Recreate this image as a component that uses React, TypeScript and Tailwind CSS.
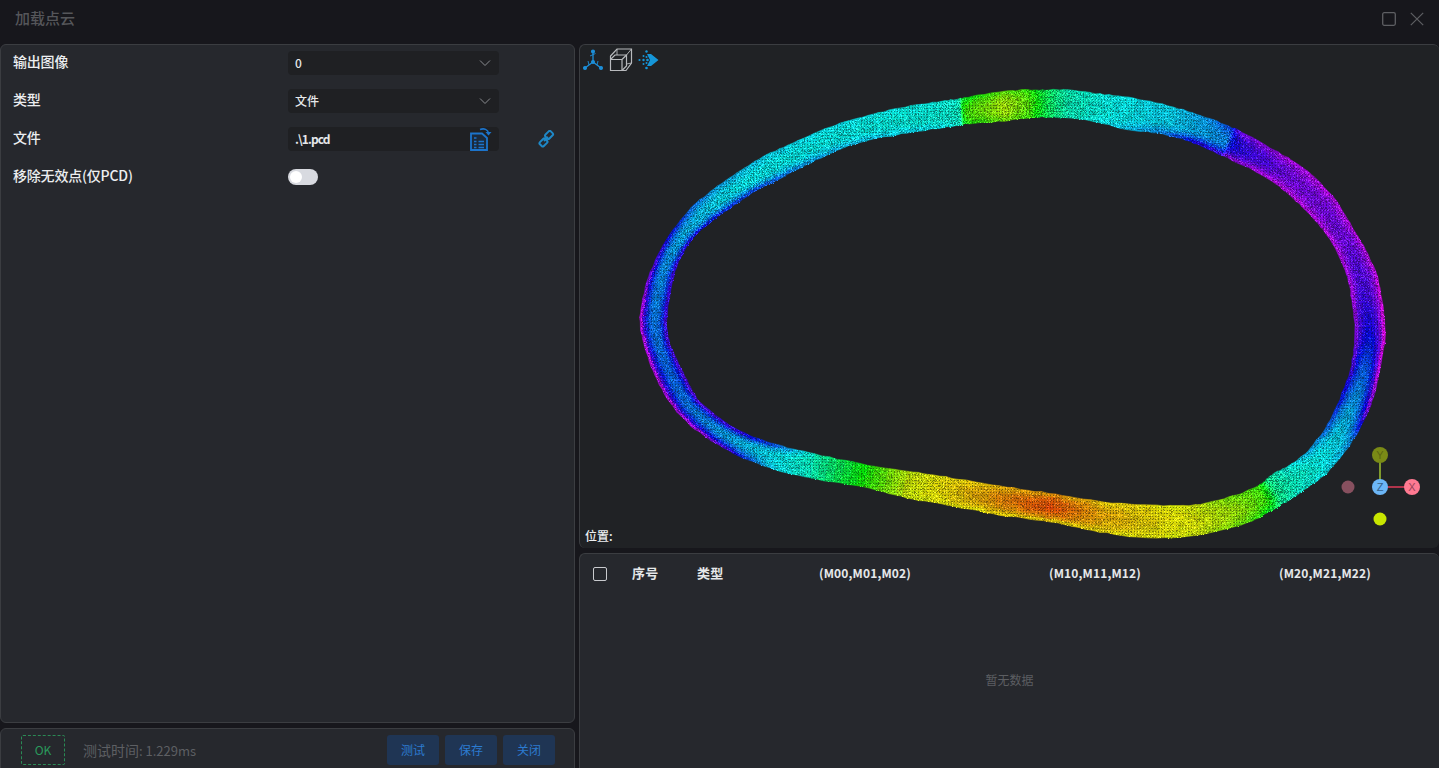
import React, { useMemo } from "react";

// ox, oy, ix, iy, mid hue, outer-edge hue, inner-edge hue
const S: number[][] = [
  [640, 318, 667, 318, 208, 285, 288],
  [647, 282, 675, 272, 204, 270, 288],
  [663, 245, 690, 242, 197, 245, 278],
  [687, 212, 712, 221, 190, 215, 270],
  [710, 192, 730, 208, 184, 200, 260],
  [737, 173, 755, 191, 180, 192, 250],
  [763, 157, 776, 181, 179, 186, 240],
  [793, 143, 806, 165, 179, 184, 215],
  [830, 127, 840, 149, 178, 182, 203],
  [863, 117, 870, 140, 177, 180, 196],
  [900, 108, 907, 133, 176, 178, 190],
  [937, 102, 940, 128, 174, 176, 184],
  [958, 99, 960, 125, 168, 170, 172],
  [964, 98, 966, 124, 105, 125, 125],
  [1000, 92, 1003, 121, 76, 95, 100],
  [1025, 90, 1027, 118, 98, 108, 112],
  [1045, 90, 1045, 117, 138, 140, 140],
  [1067, 90, 1067, 118, 165, 165, 168],
  [1100, 94, 1098, 122, 176, 176, 184],
  [1133, 98, 1125, 129, 181, 182, 195],
  [1173, 107, 1163, 134, 188, 188, 225],
  [1205, 117, 1194, 143, 198, 202, 280],
  [1230, 127, 1219, 154, 206, 225, 290],
  [1242, 132, 1228, 158, 245, 268, 295],
  [1283, 155, 1267, 178, 266, 282, 298],
  [1310, 173, 1293, 198, 270, 286, 298],
  [1333, 197, 1313, 218, 270, 286, 298],
  [1353, 228, 1330, 240, 268, 285, 298],
  [1370, 258, 1345, 270, 262, 288, 298],
  [1380, 288, 1351, 295, 256, 292, 298],
  [1385, 330, 1355, 335, 240, 296, 294],
  [1380, 370, 1350, 370, 215, 288, 280],
  [1370, 407, 1335, 410, 196, 272, 245],
  [1353, 440, 1317, 440, 184, 205, 215],
  [1330, 470, 1295, 462, 175, 180, 185],
  [1300, 493, 1275, 473, 165, 170, 165],
  [1284, 503, 1266, 480, 150, 160, 150],
  [1272, 510, 1258, 486, 105, 130, 110],
  [1247, 523, 1233, 496, 82, 95, 100],
  [1200, 535, 1195, 505, 63, 66, 70],
  [1150, 538, 1150, 505, 55, 60, 60],
  [1100, 532, 1105, 502, 42, 56, 56],
  [1050, 522, 1055, 494, 18, 50, 50],
  [1000, 515, 1007, 487, 35, 55, 55],
  [947, 505, 952, 478, 55, 60, 60],
  [907, 498, 913, 472, 68, 70, 70],
  [863, 487, 868, 465, 120, 115, 118],
  [810, 478, 815, 454, 168, 170, 172],
  [770, 468, 778, 445, 184, 190, 240],
  [733, 453, 745, 433, 194, 250, 288],
  [703, 435, 720, 418, 204, 280, 292],
  [677, 412, 697, 398, 210, 285, 292],
  [657, 380, 683, 372, 215, 285, 292],
  [645, 347, 670, 343, 210, 285, 288],
];

function cr(a: number, b: number, c: number, d: number, t: number) {
  return 0.5 * (2 * b + (c - a) * t + (2 * a - 5 * b + 4 * c - d) * t * t + (3 * b - a - 3 * c + d) * t * t * t);
}

function buildRing() {
  let seed = 12345;
  const rnd = () => {
    seed = (seed * 1664525 + 1013904223) >>> 0;
    return seed / 4294967296;
  };
  const n = S.length;
  const sub = 7;
  const across = 9;
  const rows: { x: number[]; y: number[]; h: number[] }[] = [];
  for (let i = 0; i < n; i++) {
    const p0 = S[(i - 1 + n) % n];
    const p1 = S[i];
    const p2 = S[(i + 1) % n];
    const p3 = S[(i + 2) % n];
    for (let k = 0; k < sub; k++) {
      const t = k / sub;
      const ox = cr(p0[0], p1[0], p2[0], p3[0], t) + (rnd() - 0.5) * 1.1;
      const oy = cr(p0[1], p1[1], p2[1], p3[1], t) + (rnd() - 0.5) * 1.1;
      const ix = cr(p0[2], p1[2], p2[2], p3[2], t) + (rnd() - 0.5) * 1.1;
      const iy = cr(p0[3], p1[3], p2[3], p3[3], t) + (rnd() - 0.5) * 1.1;
      const mid = p1[4] + (p2[4] - p1[4]) * t;
      const eo = p1[5] + (p2[5] - p1[5]) * t;
      const ei = p1[6] + (p2[6] - p1[6]) * t;
      const xs: number[] = [];
      const ys: number[] = [];
      const hs: number[] = [];
      for (let j = 0; j <= across; j++) {
        const u = j / across;
        xs.push(ox + (ix - ox) * u);
        ys.push(oy + (iy - oy) * u);
        const c = 2 * u - 1;
        const e = Math.pow(Math.abs(c), 2.2);
        hs.push(mid + ((c < 0 ? eo : ei) - mid) * e);
      }
      rows.push({ x: xs, y: ys, h: hs });
    }
  }
  const polys: { p: string; c: string }[] = [];
  const bright = new Map<number, string>();
  const dark = new Map<number, string>();
  for (let r = 0; r < rows.length; r++) {
    const a = rows[r];
    const b = rows[(r + 1) % rows.length];
    for (let j = 0; j < across; j++) {
      const h = a.h[j] + (rnd() - 0.5) * 4;
      const l = 42 + rnd() * 7;
      const p = `${a.x[j].toFixed(1)},${a.y[j].toFixed(1)} ${a.x[j + 1].toFixed(1)},${a.y[j + 1].toFixed(1)} ${b.x[j + 1].toFixed(1)},${b.y[j + 1].toFixed(1)} ${b.x[j].toFixed(1)},${b.y[j].toFixed(1)}`;
      polys.push({ p, c: `hsl(${h.toFixed(0)} 96% ${l.toFixed(0)}%)` });
      const q = Math.round(h / 6) * 6;
      const edge = Math.abs((j + 0.5) / across - 0.5) * 2;
      for (let d = 0; d < 4; d++) {
        const u = rnd();
        const v = rnd();
        const px = Math.round(a.x[j] + (a.x[j + 1] - a.x[j]) * v + (b.x[j] - a.x[j]) * u);
        const py = Math.round(a.y[j] + (a.y[j + 1] - a.y[j]) * v + (b.y[j] - a.y[j]) * u);
        const seg = `M${px} ${py}h1v1h-1z`;
        if (rnd() < 0.4 + edge * 0.35) bright.set(q, (bright.get(q) || "") + seg);
        else dark.set(q, (dark.get(q) || "") + seg);
      }
    }
  }
  const outer = rows.map((r) => `${r.x[0].toFixed(1)},${r.y[0].toFixed(1)}`).join(" ");
  const inner = rows
    .slice()
    .reverse()
    .map((r) => `${r.x[across].toFixed(1)},${r.y[across].toFixed(1)}`)
    .join(" ");
  const first = rows[0];
  const d = `M${outer.split(" ").join("L")}L${first.x[0].toFixed(1)},${first.y[0].toFixed(1)}ZM${inner.split(" ").join("L")}Z`;
  return {
    polys,
    d,
    bright: Array.from(bright.entries()),
    dark: Array.from(dark.entries()),
  };
}

function PointCloud() {
  const { polys, d, bright, dark } = useMemo(buildRing, []);
  return (
    <svg className="absolute left-0 top-0" width="858" height="502" viewBox="580 45 858 502">
      <defs>
        <pattern id="mesh" width="3" height="3" patternUnits="userSpaceOnUse">
          <rect x="0" y="0" width="1" height="1" fill="#0c1418" fillOpacity="0.42" />
        </pattern>
        <pattern id="mesh2" width="2.7" height="2.7" patternUnits="userSpaceOnUse">
          <rect x="0" y="0" width="1" height="2.7" fill="#0c1418" fillOpacity="0.1" />
          <rect x="0" y="0" width="2.7" height="1" fill="#0c1418" fillOpacity="0.1" />
        </pattern>
      </defs>
      {polys.map((q, i) => (
        <polygon key={i} points={q.p} fill={q.c} stroke={q.c} strokeWidth="0.5" />
      ))}
      <path d={d} fill="url(#mesh)" fillRule="evenodd" />
      <path d={d} fill="url(#mesh2)" fillRule="evenodd" />
      {dark.map(([h, p]) => (
        <path key={h} d={p} fill={`hsl(${h} 90% 27%)`} shapeRendering="crispEdges" />
      ))}
      {bright.map(([h, p]) => (
        <path key={h} d={p} fill={`hsl(${h} 100% 57%)`} shapeRendering="crispEdges" />
      ))}
    </svg>
  );
}

function Chevron() {
  return (
    <svg width="12" height="8" viewBox="0 0 12 8" fill="none" stroke="#8a8c90" strokeWidth="1">
      <path d="M1 1.5 L6 6.5 L11 1.5" />
    </svg>
  );
}

function Row({ label, children, extra }: { label: string; children: React.ReactNode; extra?: React.ReactNode }) {
  return (
    <div className="flex h-[38px] items-center">
      <div className="w-[287px] pb-[4px] pl-[12px] text-[14px] font-medium tracking-[-0.2px] text-[#eceef0]">{label}</div>
      <div className="w-[211px]">{children}</div>
      {extra}
    </div>
  );
}

function Select({ value }: { value: string }) {
  return (
    <div className="flex h-[24px] items-center justify-between rounded-[4px] bg-[#1f2023] pl-[7px] pr-[8px] text-[12px] font-medium text-[#e6e8ea]">
      <span>{value}</span>
      <Chevron />
    </div>
  );
}

function Button({ label }: { label: string }) {
  return (
    <div className="flex h-[30px] w-[52px] items-center justify-center rounded-[3px] bg-[#1f3554] text-[12px] text-[#2c7bd0]">
      {label}
    </div>
  );
}

function Gizmo() {
  return (
    <div className="absolute left-[759px] top-[399px] h-[90px] w-[90px]">
      <svg width="90" height="90" viewBox="0 0 90 90" fontFamily="Liberation Sans, sans-serif" fontSize="11" textAnchor="middle">
        <line x1="41" y1="11" x2="41" y2="43" stroke="#7f9a2c" strokeWidth="2" />
        <line x1="41" y1="43" x2="73" y2="43" stroke="#b0344b" strokeWidth="2" />
        <circle cx="9" cy="43" r="6.5" fill="#87505f" />
        <circle cx="41" cy="75" r="6.5" fill="#c8e600" />
        <circle cx="41" cy="11" r="8" fill="#7a8a16" />
        <circle cx="41" cy="43" r="8" fill="#6cb6f6" />
        <circle cx="73" cy="43" r="8" fill="#ff7a92" />
        <text x="41" y="15" fill="#5a6612">Y</text>
        <text x="41" y="47" fill="#34608a">Z</text>
        <text x="73" y="47" fill="#9a4258">X</text>
      </svg>
    </div>
  );
}

function ToolIcons() {
  return (
    <div className="absolute left-[2px] top-[3px] flex items-center gap-[5px]">
      <svg width="22" height="22" viewBox="0 0 22 22" fill="none" stroke="#1d8fd8" strokeWidth="1.3">
        <path d="M11 2 V13 L3 19 M11 13 L19 19" />
        <path d="M8 7 L13.5 4.5 M6 12 L7 16 M15 16 L16 12" strokeWidth="0.9" />
        <circle cx="11" cy="2.5" r="1.4" fill="#1d8fd8" />
        <circle cx="11" cy="13" r="1.4" fill="#1d8fd8" />
        <circle cx="3" cy="19" r="1.4" fill="#1d8fd8" />
        <circle cx="19" cy="19" r="1.4" fill="#1d8fd8" />
      </svg>
      <svg width="24" height="24" viewBox="0 0 24 24" fill="none" stroke="#b8babd" strokeWidth="1.2">
        <path d="M1.5 8 L8 1 H22.5 V15 L17 22.5 H1.5 Z" />
        <path d="M1.5 11.5 L6 7 H17.5 V18 L13 22.5" />
        <path d="M1.5 11.5 H13 V22.5 M13 11.5 L17.5 7" />
        <path d="M8 1 V7 M17.5 7 L22.5 1 M17.5 16 L22.5 15" strokeWidth="0.9" />
      </svg>
      <svg width="21" height="22" viewBox="0 0 21 22" fill="#1596d8">
        <path d="M9 5 L13 5 L20.5 11 L13 17 L9 17 L12 11 Z" />
        <circle cx="8.5" cy="2.5" r="1.2" />
        <circle cx="5.5" cy="7" r="1" />
        <circle cx="8.5" cy="8" r="1" />
        <circle cx="1.5" cy="11" r="1.1" />
        <circle cx="5.5" cy="11" r="1.2" />
        <circle cx="9.5" cy="11" r="1.3" />
        <circle cx="5.5" cy="15" r="1" />
        <circle cx="8.5" cy="14" r="1" />
        <circle cx="8.5" cy="19" r="1.3" />
      </svg>
    </div>
  );
}

export default function App() {
  return (
    <div className="flex h-[768px] w-[1439px] flex-col overflow-hidden bg-[#17171c] font-['Noto_Sans_CJK_SC','Noto_Sans',sans-serif]">
      <div className="flex h-[44px] shrink-0 items-center justify-between pb-[7px] pl-[15px] pr-[15px]">
        <span className="text-[15px] font-medium text-[#55565a]">加载点云</span>
        <div className="flex items-center gap-[14px]">
          <svg width="14" height="14" viewBox="0 0 14 14" fill="none" stroke="#5e5f63" strokeWidth="1.3">
            <rect x="0.7" y="0.7" width="12.6" height="12.6" rx="1.5" />
          </svg>
          <svg width="14" height="14" viewBox="0 0 14 14" fill="none" stroke="#5e5f63" strokeWidth="1.2">
            <path d="M0.8 0.8 L13.2 13.2 M13.2 0.8 L0.8 13.2" />
          </svg>
        </div>
      </div>

      <div className="flex min-h-0 flex-1 gap-[4px]">
        <div className="flex w-[575px] shrink-0 flex-col gap-[5px]">
          <div className="flex h-[679px] shrink-0 flex-col rounded-[6px] border border-[#3b3d41] bg-[#26282d]">
            <div className="-mt-px">
              <Row label="输出图像">
                <Select value="0" />
              </Row>
              <Row label="类型">
                <Select value="文件" />
              </Row>
              <Row
                label="文件"
                extra={
                  <svg className="ml-[38px]" width="18" height="18" viewBox="0 0 18 18" fill="none" stroke="#1e88c7" strokeWidth="2">
                    <rect x="9" y="1.5" width="7.5" height="5.5" rx="1.5" transform="rotate(-45 12.7 4.2) translate(-1 0)" />
                    <rect x="2" y="10.5" width="7.5" height="5.5" rx="1.5" transform="rotate(-45 5.7 13.2) translate(1 0)" />
                    <path d="M7 11 L11 7" />
                  </svg>
                }
              >
                <div className="flex h-[24px] items-center justify-between rounded-[4px] bg-[#1f2023] pl-[7px] pr-[7px] text-[12px] font-bold tracking-[-0.9px] text-[#e6e8ea]">
                  <span>.\1.pcd</span>
                  <svg width="24" height="24" viewBox="0 0 24 24" fill="none" stroke="#1c74cc" strokeWidth="1.8">
                    <path d="M3 6.5 H14 L19 11 V23 H3 Z" fill="#1b2a3c" />
                    <path d="M6 11 H8.5 M6 14.5 H8.5 M6 17.5 H8.5 M6 20.5 H8.5 M10.5 14.5 H16 M10.5 17.5 H16 M10.5 20.5 H16" strokeWidth="1.6" />
                    <path d="M12 2.5 C16 1 20 2.5 20.5 6" strokeWidth="1.6" />
                    <path d="M17.5 5 L20.5 8.5 L23.5 5 Z" fill="#1c74cc" stroke="none" />
                  </svg>
                </div>
              </Row>
              <Row label="移除无效点(仅PCD)">
                <div className="flex h-[16px] w-[30px] items-center rounded-full bg-[#d8dae0] pl-[2px]">
                  <div className="h-[12px] w-[12px] rounded-full bg-white" />
                </div>
              </Row>
            </div>
          </div>
          <div className="flex h-[60px] shrink-0 items-start rounded-[6px] border border-[#3b3d41] bg-[#26282d] pl-[20px] pr-[19px] pt-[6px]">
            <div className="flex h-[30px] w-[44px] items-center justify-center rounded-[2px] border border-dashed border-[#2a8a55] text-[12px] text-[#2a9a5c]">
              OK
            </div>
            <span className="ml-[18px] mt-[5px] text-[13px] text-[#5d5f63]">
              <span className="text-[14px]">测试时间</span>: 1.229ms
            </span>
            <div className="ml-auto flex gap-[6px]">
              <Button label="测试" />
              <Button label="保存" />
              <Button label="关闭" />
            </div>
          </div>
        </div>

        <div className="flex min-w-0 flex-1 flex-col gap-[5px]">
          <div className="relative h-[504px] shrink-0 overflow-hidden rounded-[6px] border border-[#3b3d41] border-b-0 border-r-0 bg-[#202225]">
            <PointCloud />
            <ToolIcons />
            <Gizmo />
            <span className="absolute bottom-[3px] left-[5px] text-[12px] font-medium text-[#eceef0]">位置:</span>
          </div>
          <div className="flex h-[260px] shrink-0 flex-col rounded-[6px] border border-[#3b3d41] border-r-0 bg-[#26282d]">
            <div className="flex h-[38px] items-center pb-[1px] text-[12px] font-bold tracking-[0.15px] text-[#e6e8ea]">
              <div className="ml-[13px] mt-[3px] h-[14px] w-[14px] rounded-[2px] border border-[#c9cbce]" />
              <span className="ml-[25px] w-[65px] text-[13px]">序号</span>
              <span className="w-[122px] text-[13px]">类型</span>
              <span className="w-[230px]">(M00,M01,M02)</span>
              <span className="w-[230px]">(M10,M11,M12)</span>
              <span>(M20,M21,M22)</span>
            </div>
            <div className="flex h-[176px] items-center justify-center text-[12px] text-[#5c5e62]">暂无数据</div>
          </div>
        </div>
      </div>
    </div>
  );
}
